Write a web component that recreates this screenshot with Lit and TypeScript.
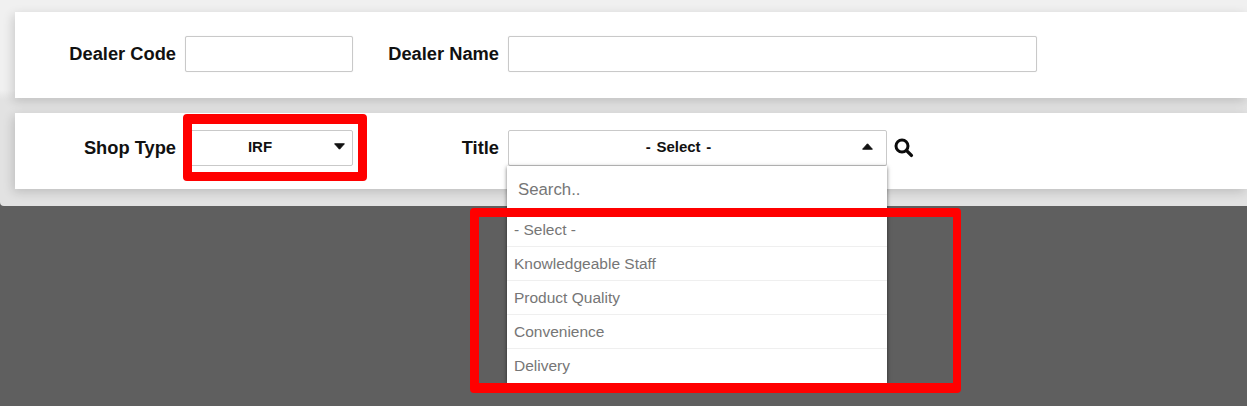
import { LitElement, html, css, svg } from "lit";
import { customElement } from "lit/decorators.js";

const caret = (up: boolean) => html`<svg class="caret ${up ? "up" : "down"}" width="11" height="7" viewBox="0 0 11 7" aria-hidden="true">
  ${up
    ? svg`<path d="M5.5 .8 10.4 6.2H.6Z" fill="#111" stroke="#111" stroke-width="1" stroke-linejoin="round"/>`
    : svg`<path d="M.6 .8H10.4L5.5 6.2Z" fill="#111" stroke="#111" stroke-width="1" stroke-linejoin="round"/>`}
</svg>`;

@customElement("app-root")
export class AppRoot extends LitElement {
  static styles = css`
    :host {
      display: flex;
      flex-direction: column;
      position: relative;
      width: 1247px;
      height: 406px;
      overflow: hidden;
      background: #5f5f5f;
      font-family: "Liberation Sans", Arial, sans-serif;
      color: #111;
    }
    .top {
      height: 206px;
      box-sizing: border-box;
      padding: 12px 0 0 15px;
      display: flex;
      flex-direction: column;
      gap: 15px;
      background: linear-gradient(#f0f0f0 0, #f0f0f0 90px, #e2e2e2 100px, #e2e2e2 100%);
      border-bottom-left-radius: 4px;
    }
    .card {
      background: #fff;
      display: flex;
      align-items: flex-start;
      box-shadow: -2px 3px 10px rgba(0, 0, 0, 0.16);
    }
    .c1 { height: 86px; padding-top: 24px; box-sizing: border-box; }
    .c2 { height: 76px; padding-top: 17px; box-sizing: border-box; }
    .label {
      font-size: 18.3px;
      font-weight: 700;
      line-height: 35px;
      text-align: right;
      white-space: nowrap;
    }
    .l1 { width: 161px; margin-right: 9px; }
    .l2 { width: 146px; margin-right: 9px; }
    .input {
      box-sizing: border-box;
      height: 36px;
      border: 1px solid #c9c9c9;
      border-radius: 2px;
      background: #fff;
      box-shadow: 0 0 1px rgba(0,0,0,.15);
    }
    .code { width: 168px; }
    .name { width: 529px; }
    .select {
      box-sizing: border-box;
      height: 36px;
      border: 1px solid #c9c9c9;
      border-radius: 2px;
      background: #fff;
      display: flex;
      align-items: center;
      justify-content: center;
      position: relative;
      padding-bottom: 3px;
      font-size: 15px;
      font-weight: 700;
      word-spacing: 1.5px;
    }
    .caret { position: absolute; top: 12px; }
    .down { right: 7px; }
    .up { right: 13px; }
    .shop { width: 168px; padding-right: 18px; }
    .title { width: 379px; padding-right: 38px; }
    .search {
      margin: 8px 0 0 7px;
      width: 20px;
      height: 20px;
    }
    .drop {
      position: absolute;
      left: 507px;
      top: 166px;
      width: 380px;
      height: 217px;
      background: #fff;
      box-shadow: 0 1px 4px rgba(0, 0, 0, 0.55);
      display: flex;
      flex-direction: column;
    }
    .find {
      height: 47px;
      box-sizing: border-box;
      padding: 0 11px 0;
      line-height: 47px;
      font-size: 16.8px;
      color: #767676;
    }
    .opt {
      height: 34px;
      box-sizing: border-box;
      padding-left: 7px;
      font-size: 15.5px;
      line-height: 33px;
      color: #767676;
      border-bottom: 1px solid #efefef;
    }
    .opt:last-child { border-bottom: 0; }
    .mark {
      position: absolute;
      box-sizing: border-box;
      border-style: solid;
      border-color: #ff0000;
      border-radius: 4px;
      pointer-events: none;
    }
    .m1 { left: 183px; top: 114px; width: 184px; height: 67px; border-width: 10px 9px 9px 9px; }
    .m2 { left: 470px; top: 208px; width: 491px; height: 185px; border-width: 9px 8px 10px 9px; }
  `;

  render() {
    const options = ["- Select -", "Knowledgeable Staff", "Product Quality", "Convenience", "Delivery"];
    return html`
      <div class="top">
        <div class="card c1">
          <div class="label l1">Dealer Code</div>
          <div class="input code"></div>
          <div class="label l2">Dealer Name</div>
          <div class="input name"></div>
        </div>
        <div class="card c2">
          <div class="label l1">Shop Type</div>
          <div class="select shop">IRF${caret(false)}</div>
          <div class="label l2">Title</div>
          <div class="select title">- Select -${caret(true)}</div>
          <svg class="search" viewBox="0 0 20 20" aria-hidden="true">
            <circle cx="8" cy="8" r="6" fill="none" stroke="#0b0b0b" stroke-width="3"/>
            <path d="M12.6 12.6 17.4 17.4" stroke="#0b0b0b" stroke-width="3.4" stroke-linecap="round"/>
          </svg>
        </div>
      </div>
      <div class="drop">
        <div class="find">Search..</div>
        ${options.map((o) => html`<div class="opt">${o}</div>`)}
      </div>
      <div class="mark m1"></div>
      <div class="mark m2"></div>
    `;
  }
}
